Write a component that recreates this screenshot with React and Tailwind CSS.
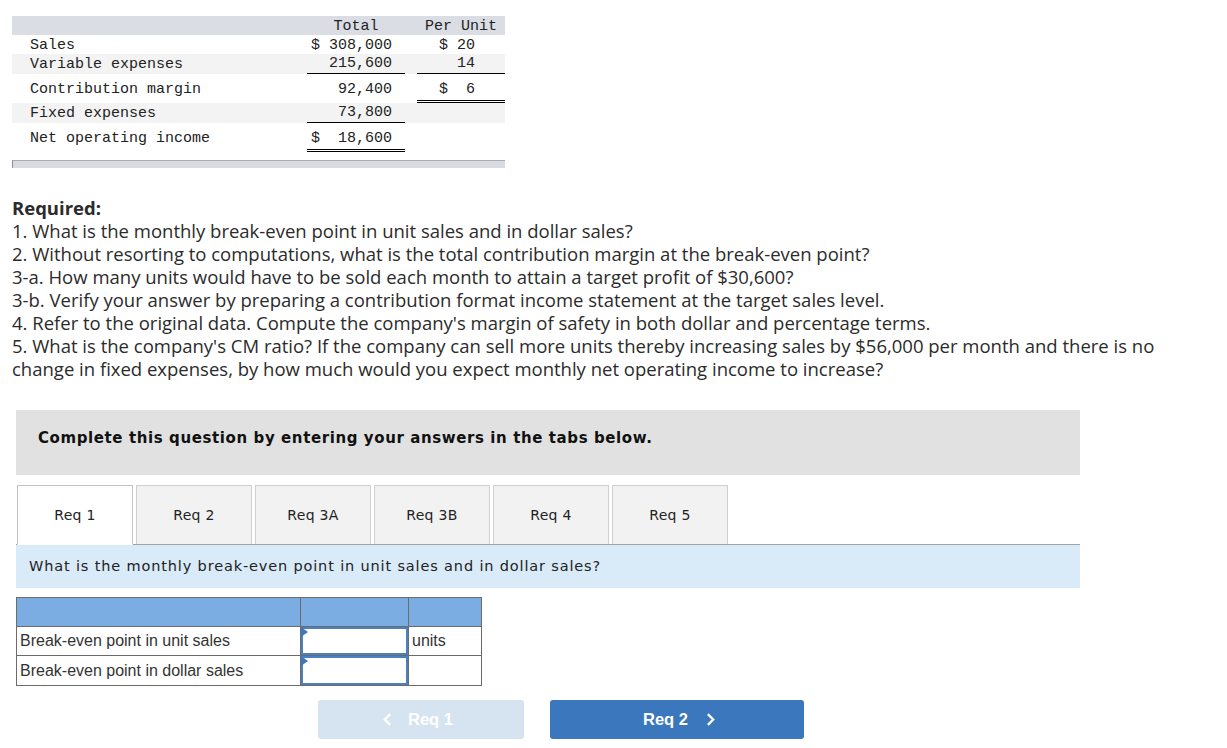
import React from 'react';

const mono = { fontFamily: '"Liberation Mono", "DejaVu Sans Mono", monospace' };

const Chevron = ({ dir = 'right', className = '' }) => (
  <svg viewBox="0 0 10 16" className={className} fill="none" stroke="currentColor" strokeWidth="2.6" strokeLinecap="square">
    {dir === 'right' ? <polyline points="3,3 8,8 3,13" /> : <polyline points="7,3 2,8 7,13" />}
  </svg>
);

const IncomeTable = () => (
  <div className="ml-[12px] mt-[16px] w-[493px] text-[15px] text-[#222] leading-none" style={mono}>
    {/* header */}
    <div className="grid grid-cols-[295px_98px_12px_88px] h-[19px] bg-[#dadde4] items-center">
      <div />
      <div className="text-center pt-[2px]">Total</div>
      <div />
      <div className="text-center pt-[2px]">Per Unit</div>
    </div>
    <div className="grid grid-cols-[295px_98px_12px_88px] h-[19px] items-center">
      <div className="pl-[18px] pt-[2px]">Sales</div>
      <div className="text-right pr-[13px] pt-[2px] whitespace-pre">$ 308,000</div>
      <div />
      <div className="text-right pr-[30px] pt-[2px] whitespace-pre">$ 20</div>
    </div>
    <div className="grid grid-cols-[295px_98px_12px_88px] h-[20px] bg-[#f3f3f3]">
      <div className="pl-[18px] flex items-center">Variable expenses</div>
      <div className="text-right pr-[13px] border-b border-black bg-[#f3f3f3] flex items-center justify-end">215,600</div>
      <div />
      <div className="text-right pr-[30px] border-b border-black flex items-center justify-end">14</div>
    </div>
    <div className="grid grid-cols-[295px_98px_12px_88px] h-[29px]">
      <div className="pl-[18px] pt-[8px]">Contribution margin</div>
      <div className="text-right pr-[13px] pt-[8px]">92,400</div>
      <div />
      <div className="text-right pr-[30px] pt-[8px] border-b-[3px] border-double border-black whitespace-pre">$  6</div>
    </div>
    <div className="grid grid-cols-[295px_98px_12px_88px] h-[20px] bg-[#f3f3f3]">
      <div className="pl-[18px] flex items-center">Fixed expenses</div>
      <div className="text-right pr-[13px] border-b border-black flex items-center justify-end">73,800</div>
      <div />
      <div />
    </div>
    <div className="grid grid-cols-[295px_98px_12px_88px] h-[29px]">
      <div className="pl-[18px] pt-[8px]">Net operating income</div>
      <div className="text-right pr-[13px] pt-[8px] border-b-[3px] border-double border-black whitespace-pre">$  18,600</div>
      <div />
      <div />
    </div>
    <div className="mt-[8px] h-[8px] bg-[#d8dbe2] border-t border-[#a9acb3] border-l border-l-[#8d9096]" />
  </div>
);

const questions = [
  '1. What is the monthly break-even point in unit sales and in dollar sales?',
  '2. Without resorting to computations, what is the total contribution margin at the break-even point?',
  '3-a. How many units would have to be sold each month to attain a target profit of $30,600?',
  '3-b. Verify your answer by preparing a contribution format income statement at the target sales level.',
  "4. Refer to the original data. Compute the company's margin of safety in both dollar and percentage terms.",
];

const tabs = ['Req 1', 'Req 2', 'Req 3A', 'Req 3B', 'Req 4', 'Req 5'];

export default function App() {
  const verdana = { fontFamily: '"DejaVu Sans", Verdana, sans-serif' };
  const arial = { fontFamily: '"Liberation Sans", Arial, sans-serif' };

  return (
    <div className="w-[1227px] h-[748px] bg-white overflow-hidden">
      <IncomeTable />

      {/* Required */}
      <div className="mt-[28px] ml-[12px] text-[18.5px] leading-[23px] text-[#2b2b2b]" style={{ fontFamily: '"Open Sans", Lato, sans-serif' }}>
        <div className="font-bold">Required:</div>
        {questions.map((q) => (
          <div key={q}>{q}</div>
        ))}
        <div>
          5. What is the company's CM ratio? If the company can sell more units thereby increasing sales by $56,000 per month and there is no
          <br />
          change in fixed expenses, by how much would you expect monthly net operating income to increase?
        </div>
      </div>

      {/* Instructions */}
      <div className="ml-[16px] mt-[30px] w-[1064px] h-[65px] bg-[#e1e1e1] pl-[22px] pt-[17px]">
        <div className="font-bold text-[15px] tracking-[0.6px] text-[#111]" style={verdana}>
          Complete this question by entering your answers in the tabs below.
        </div>
      </div>

      {/* Tabs */}
      <div className="ml-[16px] mt-[10px] w-[1064px] flex items-end gap-[3px] pl-[1px] border-b border-[#a3a3a3]" style={verdana}>
        {tabs.map((t, i) => (
          <div
            key={t}
            className={
              i === 0
                ? 'w-[116px] h-[60px] -mb-px bg-white border border-[#c4c4c4] border-b-white flex items-center justify-center text-[14px] tracking-[0.3px] text-[#222]'
                : 'w-[116px] h-[59px] bg-[#f2f2f2] border border-b-0 border-[#cfcfcf] flex items-center justify-center text-[14px] tracking-[0.3px] text-[#222]'
            }
          >
            {t}
          </div>
        ))}
      </div>

      <div className="ml-[16px] w-[1064px] h-[43px] bg-[#d9eaf8] pl-[13px] flex items-center text-[14.5px] tracking-[0.85px] text-[#222]" style={verdana}>
        What is the monthly break-even point in unit sales and in dollar sales?
      </div>

      {/* Answer table */}
      <div className="ml-[16px] mt-[9px] w-[466px] border border-[#6b6b6b] text-[16px] text-[#333]" style={arial}>
        <div className="grid grid-cols-[284px_108px_1fr] h-[29px] bg-[#7badE3] border-b border-[#6b6b6b]">
          <div className="border-r border-[#6b6b6b]" />
          <div className="border-r border-[#6b6b6b]" />
          <div />
        </div>
        {[
          { label: 'Break-even point in unit sales', unit: 'units' },
          { label: 'Break-even point in dollar sales', unit: '' },
        ].map((r, i) => (
          <div key={r.label} className={`grid grid-cols-[284px_108px_1fr] h-[29px] ${i === 0 ? 'border-b border-[#6b6b6b]' : ''}`}>
            <div className="border-r border-[#6b6b6b] pl-[3px] flex items-center">{r.label}</div>
            <div className="border-r border-[#6b6b6b] relative">
              <div className="absolute inset-0 border-2 border-[#4a7fc0] bg-white" />
              <div className="absolute left-0 top-0 w-0 h-0 border-t-[5px] border-b-[5px] border-l-[7px] border-t-transparent border-b-transparent border-l-[#3f77bd]" />
            </div>
            <div className="pl-[3px] flex items-center">{r.unit}</div>
          </div>
        ))}
      </div>

      {/* Nav buttons */}
      <div className="flex mt-[14px] ml-[318px] gap-[26px] font-bold text-[16.5px] text-white" style={arial}>
        <div className="w-[206px] h-[39px] rounded-[3px] bg-[#d6e3f1] flex items-center justify-center gap-[16px] pr-[6px]">
          <Chevron dir="left" className="w-[9px] h-[15px]" />
          <span>Req 1</span>
        </div>
        <div className="w-[254px] h-[39px] rounded-[3px] bg-[#3b77bd] flex items-center justify-center gap-[18px] pl-[4px]">
          <span>Req 2</span>
          <Chevron dir="right" className="w-[9px] h-[15px]" />
        </div>
      </div>
    </div>
  );
}
